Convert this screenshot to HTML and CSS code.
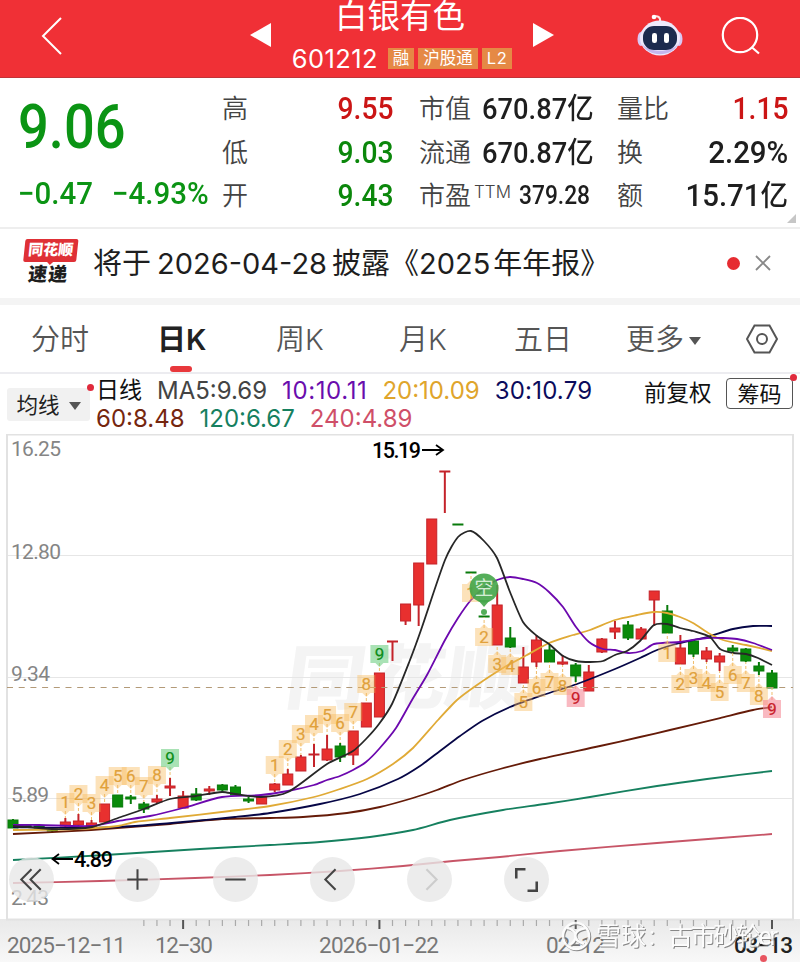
FILE: index.html
```html
<!DOCTYPE html>
<html lang="zh-CN">
    <head>
        <meta charset="UTF-8">
        <meta name="viewport" content="width=device-width, initial-scale=1.0">
        <title>白银有色 601212</title>
        <link rel="stylesheet" href="styles.css">
    </head>

    <body>
        <header class="header">
            <svg class="back" width="22" height="38" viewBox="0 0 22 38"><path d="M20 1 L2 19 L20 37"/></svg>
            <svg class="prev" width="21" height="24" viewBox="0 0 21 24"><path d="M0 12 L21 0 V24 Z"/></svg>
            <div class="stock">
                <h1>白银有色</h1>
                <div class="stock-code">
                    <span class="code">601212</span>
                    <span class="tag">融</span>
                    <span class="tag">沪股通</span>
                    <span class="tag level">L2</span>
                </div>
            </div>
            <svg class="next" width="21" height="24" viewBox="0 0 21 24"><path d="M21 12 L0 0 V24 Z"/></svg>
            <svg class="robot" width="46" height="44" viewBox="0 0 46 44">
                <path d="M23 8 C24 3 20 1 17 3" fill="none" stroke="#ffe4e4" stroke-width="2"/>
                <circle cx="17" cy="3" r="2.3" fill="#fff"/>
                <ellipse cx="4" cy="25" rx="3.5" ry="7" fill="#d9c8f4"/>
                <ellipse cx="42" cy="25" rx="3.5" ry="7" fill="#d9c8f4"/>
                <ellipse cx="23" cy="24" rx="20" ry="17.5" fill="#eee9fc"/>
                <path d="M5 30 C10 43 35 44 41 30 C34 39 12 39 5 30Z" fill="#c5b6ee"/>
                <rect x="6" y="12" width="34" height="24" rx="11" fill="#1c2a4e"/>
                <rect x="15" y="19" width="5" height="10" rx="2.3" fill="#fff"/>
                <rect x="27" y="19" width="5" height="10" rx="2.3" fill="#fff"/>
            </svg>
            <svg class="search" width="40" height="40" viewBox="0 0 40 40"><circle cx="19" cy="18" r="17.2"/><path d="M30.500 30 L38 36.500"/></svg>
        </header>

        <section class="quote">
            <div class="price">
                <div class="last num">9.06</div>
                <div class="change"><span class="num">−0.47</span><span class="num">−4.93%</span></div>
            </div>
            <dl class="stats">
                <div><dt>高</dt><dd class="num red">9.55</dd></div>
                <div><dt>低</dt><dd class="num green">9.03</dd></div>
                <div><dt>开</dt><dd class="num green">9.43</dd></div>
            </dl>
            <dl class="stats">
                <div><dt>市值</dt><dd class="num cap">670.87<i>亿</i></dd></div>
                <div><dt>流通</dt><dd class="num cap">670.87<i>亿</i></dd></div>
                <div><dt>市盈<sup>TTM</sup></dt><dd class="num small">379.28</dd></div>
            </dl>
            <dl class="stats">
                <div><dt>量比</dt><dd class="num red">1.15</dd></div>
                <div><dt>换</dt><dd class="num wide">2.29%</dd></div>
                <div><dt>额</dt><dd class="num wide">15.71<i>亿</i></dd></div>
            </dl>
            <span class="corner"></span>
        </section>

        <section class="news">
            <div class="news-logo">
                <span class="logo-top">同花顺</span>
                <span class="logo-bottom">速递</span>
            </div>
            <p>将于<span class="date">2026-04-28</span>披露《<span class="year">2025</span>年年报》</p>
            <span class="dot"></span>
            <svg class="close" width="16" height="16" viewBox="0 0 16 16"><path d="M1 1 L15 15 M15 1 L1 15"/></svg>
        </section>

        <nav class="tabs">
            <a>分时</a>
            <a class="active">日K</a>
            <a>周K</a>
            <a>月K</a>
            <a>五日</a>
            <a>更多<span class="caret"></span></a>
            <svg width="32" height="30" viewBox="0 0 32 30"><path d="M8.5 1.5 H23.5 L31 15 L23.5 28.500 H8.500 L1 15 Z"/><circle cx="16" cy="15" r="5"/></svg>
        </nav>

        <section class="legend">
            <button class="ma-select">均线<span class="caret"></span></button>
            <div class="ma-list">
                <div class="ma-row">
                    <b>日线</b>
                    <span class="ma5">MA5:9.69</span>
                    <span class="ma10">10:10.11</span>
                    <span class="ma20">20:10.09</span>
                    <span class="ma30">30:10.79</span>
                </div>
                <div class="ma-row">
                    <span class="ma60">60:8.48</span>
                    <span class="ma120">120:6.67</span>
                    <span class="ma240">240:4.89</span>
                </div>
            </div>
            <span class="adjust">前复权</span>
            <button class="chips">筹码</button>
        </section>

        <section class="chart">
            <svg id="kline" width="800" height="528" viewBox="0 434 800 528">
                <defs>
                    <linearGradient id="axis" x1="0" y1="0" x2="0" y2="1">
                        <stop offset="0" stop-color="#e9e9e9"/>
                        <stop offset="1" stop-color="#f8f8f8"/>
                    </linearGradient>
                </defs>
                <rect x="0" y="919" width="800" height="43" fill="url(#axis)"/>
                <text class="brand" transform="translate(283 703) skewX(-8)" textLength="240" lengthAdjust="spacingAndGlyphs">同花顺</text>
                <path class="grid" d="M7 555.500 H793 M7 677.500 H793 M7 798.500 H793"/>
                <rect class="frame" x="7" y="434.500" width="786" height="485"/>
                <g class="scale">
                    <text x="11" y="456" textLength="50">16.25</text>
                    <text x="11" y="559" textLength="50">12.80</text>
                    <text x="11" y="681" textLength="39">9.34</text>
                    <text x="11" y="802" textLength="38">5.89</text>
                    <text x="11" y="905" textLength="38">2.43</text>
                </g>
                <g id="candles"></g>
                <path class="current" d="M7 687.500 H793"/>
                <g id="averages"></g>
                <g id="marks"></g>
                <g class="pin">
                    <path d="M484 607 L478 600 H490 Z"/>
                    <circle cx="484" cy="588" r="14.500"/>
                    <circle cx="484" cy="612" r="3"/>
                    <text x="484" y="595">空</text>
                </g>
                <g class="extreme">
                    <text x="372" y="458" textLength="49">15.19</text>
                    <path d="M422 450 H442 M436 445 L443 450 L436 455"/>
                    <text x="74" y="867" textLength="39">4.89</text>
                    <path d="M73 859 H53 M59 854 L52.500 859 L59 864"/>
                </g>
                <g id="ticks"></g>
                <g class="dates">
                    <text x="7" y="953" textLength="119">2025−12−11</text>
                    <text x="155" y="953" textLength="58">12−30</text>
                    <text x="319" y="953" textLength="120">2026−01−22</text>
                    <text x="546" y="953" textLength="59">02−12</text>
                    <text class="today" x="734" y="953" textLength="59">03−13</text>
                </g>
                <circle cx="763.500" cy="958.500" r="3.500" fill="#e85560"/>
                <g class="watermark">
                    <circle cx="576" cy="936" r="13"/>
                    <path d="M567 928 C575 929 580 938 570 945 M586 928 C572 930 572 940 584 944"/>
                    <text x="596" y="945" textLength="50">雪球</text>
                    <text x="649" y="945">:</text>
                    <text x="668" y="945" textLength="110">古市砂轮er</text>
                </g>
            </svg>
            <div class="controls">
                <button><svg viewBox="0 0 44 44"><path d="M22 12 L12 22 L22 32 M31 12 L21 22 L31 32"/></svg></button>
                <button><svg viewBox="0 0 44 44"><path d="M12 22 H32 M22 12 V32"/></svg></button>
                <button><svg viewBox="0 0 44 44"><path d="M12 22 H32"/></svg></button>
                <button><svg viewBox="0 0 44 44"><path d="M25 12 L15 22 L25 32"/></svg></button>
                <button class="disabled"><svg viewBox="0 0 44 44"><path d="M19 12 L29 22 L19 32"/></svg></button>
                <button><svg viewBox="0 0 44 44"><path class="bold" d="M12 21 V12 H21 M32 24 V33 H23"/></svg></button>
            </div>
        </section>

        <script src="chart.js"></script>
    </body>
</html>
```
FILE: styles.css
```css
body {
    margin: 0;
    width: 800px;
    height: 962px;
    overflow: hidden;
    background-color: #fff;
    font-family: Inter, "Noto Sans CJK SC", sans-serif;
    color: #1e1e1e;
}

button {
    font-family: inherit;
    border: none;
    padding: 0;
}

svg {
    display: block;
    fill: none;
}

.red { color: #cb1515; }
.green { color: #0b870b; }

.num {
    font-family: Roboto, "Noto Sans CJK SC", sans-serif;
    font-weight: 500;
}

/* header */
.header {
    display: flex;
    align-items: flex-start;
    box-sizing: border-box;
    height: 78px;
    background-color: #f03036;
    border-bottom: 1px solid #c13338;
    color: #fff;
}

.header .back {
    margin: 17px 0 0 41px;
    stroke: #fff;
    stroke-width: 2;
}

.header .prev,
.header .next {
    margin-top: 23px;
    fill: #fff;
}

.header .prev { margin-left: 187px; }
.header .robot { margin: 14px 0 0 83px; }

.header .search {
    margin: 17px 0 0 38px;
    stroke: #fff;
    stroke-width: 2.2;
}

.stock {
    width: 262px;
    display: flex;
    flex-direction: column;
    align-items: center;
}

.stock h1 {
    margin: 0 4px 0 0;
    height: 44px;
    font-size: 32.5px;
    font-weight: 400;
    line-height: 34px;
}

.stock-code {
    display: flex;
    align-items: center;
    gap: 4px;
    height: 28px;
}

.stock-code .code {
    width: 92px;
    font-size: 25.5px;
    letter-spacing: 0.4px;
}

.tag {
    padding: 0 5px;
    height: 21px;
    background-color: #e58945;
    font-size: 16.5px;
    line-height: 20px;
}

.tag.level { letter-spacing: 0.5px; }

/* quote panel */
.quote {
    position: relative;
    display: grid;
    grid-template-columns: 204px 171px 171px 171px;
    box-sizing: border-box;
    height: 151px;
    padding-left: 18px;
    border-bottom: 2px solid #eee;
}

.price { color: #0b9414; }

.last {
    height: 94px;
    font-size: 62px;
    line-height: 97px;
    transform: scaleX(0.875);
    transform-origin: 0 0;
}

.change {
    display: flex;
    gap: 20px;
    font-size: 31px;
    line-height: 44px;
    transform: scaleX(0.95);
    transform-origin: 0 0;
    white-space: nowrap;
}

.stats {
    margin: 9px 0 0;
}

.stats + .stats { margin-left: 26px; width: 171px; }
.stats + .stats + .stats { margin-left: 53px; }

.stats > div {
    display: flex;
    justify-content: space-between;
    height: 43.5px;
    line-height: 43.5px;
    white-space: nowrap;
}

.stats dt {
    font-size: 26px;
    font-weight: 350;
    color: #444;
}

.stats sup {
    font-size: 17px;
    line-height: 0;
    vertical-align: 7px;
    margin-left: 3px;
}

.stats dd {
    margin: 0;
    font-size: 31px;
    transform: scaleX(0.91);
    transform-origin: 100% 0;
}

.stats .cap { font-size: 30px; }
.stats .wide { transform: scaleX(0.95); }
.stats dd.small { font-size: 25px; }
.stats dd i { font-style: normal; font-size: 29px; }

.corner {
    position: absolute;
    right: 4px;
    bottom: 4px;
    border-left: 9px solid transparent;
    border-bottom: 9px solid #c6c6c6;
}

/* news strip */
.news {
    display: flex;
    align-items: center;
    box-sizing: border-box;
    height: 76px;
    padding: 0 29px 7px 22px;
    border-bottom: 7px solid #f4f4f4;
}

.news-logo {
    display: flex;
    flex-direction: column;
    align-items: center;
    width: 55px;
    margin-top: 6px;
    font-weight: 900;
    transform: skewX(-6deg);
}

.logo-top {
    position: relative;
    width: 53px;
    height: 23px;
    border-radius: 2px;
    background-color: #df3036;
    color: #fff;
    font-size: 15px;
    line-height: 22px;
    text-align: center;
}

.logo-top::after {
    content: "";
    position: absolute;
    left: 24px;
    top: 23px;
    border: 3px solid transparent;
    border-top-color: #df3036;
}

.logo-bottom {
    font-size: 19px;
    line-height: 25px;
    letter-spacing: 1px;
}

.news p {
    flex: 1;
    margin: 2px 0 0 16px;
    font-size: 29px;
    white-space: nowrap;
}

.news .date { margin: 0 5px 0 6px; }
.news .year { margin-right: 3px; }

.news .dot {
    width: 13px;
    height: 13px;
    margin: 6px 15px 0 0;
    border-radius: 50%;
    background-color: #e62c31;
}

.news .close {
    margin-top: 5px;
    stroke: #888;
    stroke-width: 1.8;
}

/* period tabs */
.tabs {
    display: grid;
    grid-template-columns: 126px 119px 123px 115px 112px 120px 32px;
    align-items: center;
    box-sizing: border-box;
    height: 69px;
    padding-left: 31px;
    border-bottom: 2px solid #ececf0;
    font-size: 29px;
    font-weight: 350;
    color: #555;
}

.tabs a {
    position: relative;
    line-height: 69px;
    height: 67px;
    white-space: nowrap;
}

.tabs .active {
    font-weight: 600;
    color: #222;
}

.tabs .active::after {
    content: "";
    position: absolute;
    left: 13px;
    bottom: 0;
    width: 22px;
    height: 6px;
    border-radius: 3px;
    background-color: #e8383c;
}

.tabs svg {
    stroke: #555;
    stroke-width: 2;
}

.caret {
    display: inline-block;
    margin-left: 5px;
    border: 6px solid transparent;
    border-top: 8px solid #555;
    border-bottom: none;
    vertical-align: 5px;
}

/* moving average legend */
.legend {
    display: flex;
    height: 60px;
    color: #111;
}

.ma-select {
    position: relative;
    width: 83px;
    height: 33px;
    margin: 14px 7px 0 7px;
    border-radius: 3px;
    background-color: #f1f1f1;
    font-size: 21.500px;
    line-height: 30px;
    color: #222;
}

.ma-select .caret { margin-left: 9px; vertical-align: 3px; }

.ma-select::after,
.chips::after {
    content: "";
    position: absolute;
    width: 7px;
    height: 7px;
    border-radius: 50%;
    background-color: #e02a3c;
}

.ma-select::after { right: -4px; top: -4px; }

.ma-list {
    width: 547px;
    margin-left: -1px;
    margin-right: 1px;
    padding-top: 2px;
    font-size: 24px;
    line-height: 29px;
}

.ma-row {
    display: flex;
    gap: 15px;
    height: 28px;
    white-space: nowrap;
}

.ma-row b { font-size: 23px; font-weight: 400; }
.ma5 { color: #444; }
.ma10 { color: #6a0dad; letter-spacing: 0.6px; }
.ma20 { color: #dfa52c; }
.ma30 { color: #0b0b5c; letter-spacing: 0.2px; }
.ma60 { color: #75260e; }
.ma120 { color: #16805f; }
.ma240 { color: #cf4f68; }

.adjust {
    width: 82px;
    padding-top: 4px;
    font-size: 22.500px;
    line-height: 30px;
}

.chips {
    position: relative;
    width: 67px;
    height: 31px;
    margin-top: 4px;
    box-sizing: border-box;
    border: 1px solid #555;
    border-radius: 4px;
    background-color: #fff;
    font-size: 22px;
    line-height: 26px;
    color: #111;
}

.chips::after { right: -5px; top: -5px; }

/* chart */
.chart { position: relative; }

.chart text { font-family: Roboto, "Noto Sans CJK SC", sans-serif; }

.brand { font-size: 70px; font-weight: 900; fill: #f4f4f4; }
.grid { stroke: #e6e6e6; }
.frame { stroke: #e2e2e2; stroke-width: 2; }
.current { stroke: #b39a78; stroke-dasharray: 6 5.7; stroke-width: 1.2; }
.scale { font-size: 21px; fill: #858585; }
.dates { font-size: 22.5px; fill: #777; }
.dates .today { font-weight: 500; fill: #222; }
.ticks { stroke: #aaa; stroke-width: 1.2; }
.major { stroke: #555; stroke-width: 2; }

.up { fill: #e8302f; stroke: #c4232a; }
.down { fill: #0a8a0a; stroke: #087a0b; }
.wick { stroke-width: 2; }
.average { stroke-width: 1.8; stroke-linejoin: round; }

.mark { fill: #f8ba5b; fill-opacity: 0.42; }
.mark.green { fill: #6fcf83; fill-opacity: 0.6; }
.mark.pink { fill: #f58b98; fill-opacity: 0.6; }
.mark-line { stroke: #efbd6b; stroke-dasharray: 3 2; }
.mark-text { font-size: 17px; text-anchor: middle; fill: #e1a13b; stroke: #e1a13b; stroke-width: 0.2; }
.mark-text.green { fill: #0c8d18; stroke: #0c8d18; }
.mark-text.pink { fill: #c91d2b; stroke: #c91d2b; }

.pin { fill: #43a548; fill-opacity: 0.9; }
.pin text { font-size: 19px; fill: #e5f7e6; text-anchor: middle; }

.extreme { fill: #000; }
.extreme text { font-size: 21.500px; font-weight: 500; }
.extreme path { fill: none; stroke: #000; stroke-width: 1.8; }

.watermark { fill: #fff; opacity: 0.85; filter: drop-shadow(1px 1px 0.5px #777); }
.watermark text { font-size: 25px; fill: #fff; }
.watermark circle,
.watermark path { fill: none; stroke: #fff; stroke-width: 2.5; }

.controls {
    position: absolute;
    left: 9px;
    top: 423px;
    display: flex;
    gap: 52.300px;
}

.controls button {
    width: 45px;
    height: 45px;
    border-radius: 50%;
    background-color: rgba(231, 231, 231, 0.8);
}

.controls button:first-child { margin-right: 9px; }

.controls path { stroke: #444; stroke-width: 2; }
.controls .bold { stroke-width: 2.5; }
.controls .disabled path { stroke: #ccc; }
```
FILE: chart.js
```javascript
const NS = 'http://www.w3.org/2000/svg';
const STEP = 13.086;
const FIRST = 13;

// [direction, high, body top, body bottom, low]
const candles = [
    ['d', 819, 820, 828, 828], ['d', 824, 825, 827, 828], ['d', 825, 826, 828, 829], ['d', 827, 828, 831, 833],
    ['u', 818, 822, 826, 827], ['u', 814, 821, 825, 826], ['u', 820, 823, 826, 826], ['u', 804, 804, 822, 822],
    ['d', 795, 795, 807, 807], ['d', 795, 797, 799, 804], ['d', 802, 804, 809, 813], ['u', 795, 799, 802, 803],
    ['u', 778, 786, 788, 796], ['u', 791, 796, 808, 808], ['d', 788, 794, 800, 801], ['u', 786, 789, 791, 795],
    ['d', 784, 785, 790, 792], ['d', 785, 787, 795, 795], ['d', 797, 799, 801, 803], ['u', 797, 797, 804, 804],
    ['u', 783, 784, 790, 792], ['u', 769, 774, 785, 785], ['u', 755, 757, 771, 771], ['u', 744, 754, 755, 767],
    ['u', 735, 749, 760, 761], ['d', 743, 746, 757, 762], ['u', 731, 731, 755, 765], ['u', 703, 703, 727, 727],
    ['u', 673, 673, 717, 717], ['u', 641, 641, 642, 661], ['u', 604, 604, 621, 625], ['u', 563, 563, 605, 626],
    ['u', 519, 519, 564, 564], ['u', 471, 471, 472, 513], ['d', 524, 524, 525, 525], ['d', 572, 572, 573, 573],
    ['d', 616, 616, 617, 617], ['u', 585, 605, 645, 645], ['d', 627, 638, 647, 648], ['u', 647, 667, 683, 683],
    ['u', 635, 640, 662, 667], ['d', 645, 650, 662, 662], ['u', 655, 662, 664, 665], ['d', 663, 665, 676, 682],
    ['u', 665, 672, 691, 691], ['u', 638, 639, 652, 653], ['u', 621, 628, 632, 639], ['d', 621, 625, 638, 640],
    ['u', 627, 629, 639, 640], ['u', 591, 591, 600, 626], ['d', 605, 611, 633, 633], ['u', 635, 648, 664, 664],
    ['d', 640, 641, 654, 657], ['u', 647, 651, 659, 662], ['u', 653, 656, 662, 671], ['d', 645, 648, 651, 653],
    ['d', 648, 649, 661, 662], ['d', 662, 666, 671, 675], ['d', 670, 673, 688, 688]
];

const averages = {
    '#16805f': '13,860 105,855 200,849 270,845 320,842 370,837 413,830 450,820 503,810 545,804 590,797 657,786 707,779 772,771',
    '#c75567': '13,883 100,881 195,878 270,875 340,871 403,866 453,861 500,857 560,851 657,843 772,834',
    '#651b08': '13,834 91,830 170,824 222,819 270,818 303,817 347,813 380,807 413,798 437,790 463,780 500,769 540,759 600,746 640,737 670,730 720,718 753,710 772,707',
    '#060646': '13,827 91,828 135,826 183,822 235,817 270,813 320,804 360,794 398,779 420,766 440,751 460,736 482,721 510,707 543,695 577,684 615,669 640,658 657,650 680,643 707,637 733,629 753,626 772,626',
    '#e0aa36': '13,830 78,829 118,826 135,822 170,818 230,811 270,806 314,797 340,789 367,779 393,764 413,748 438,720 457,700 477,685 503,668 527,655 549,643 573,635 590,630 615,620 637,615 654,612 667,613 680,617 693,623 710,634 723,640 746,645 772,651',
    '#6c08ae': '13,825 39,825 91,826 118,821 150,816 183,808 222,797 261,795 288,791 314,785 327,780 340,776 353,770 366,762 379,749 396,728 412,700 427,675 445,640 458,618 471,600 484,588 497,580 510,577 523,579 537,583 549,592 563,607 576,627 589,642 603,649 615,650 628,653 642,651 654,644 680,642 693,640 707,638 723,638 737,639 753,643 772,650',
    '#272727': '13,826 52,829 92,827 118,818 144,809 170,799 196,796 222,792 235,794 261,797 288,792 327,764 353,751 366,739 379,724 392,704 410,660 421,630 445,560 458,537 471,531 484,541 497,558 510,592 523,622 537,636 549,644 563,656 576,661 590,662 603,661 615,655 627,651 640,641 654,625 667,624 680,628 693,631 710,637 720,649 733,653 746,654 758,658 772,665'
};

// nine-count groups: first candle, side of the candle, centre of each box
const counts = [
    { start: 4, side: 'top', last: 'green', y: [802, 794, 803, 785, 776, 776, 786, 775, 758] },
    { start: 20, side: 'top', last: 'green', y: [765, 749, 734, 724, 715, 723, 712, 684, 654] },
    { start: 35, side: 'bottom', last: 'pink', y: [593, 637, 664, 666, 702, 688, 682, 686, 698] },
    { start: 50, side: 'bottom', last: 'pink', y: [653, 684, 678, 683, 692, 675, 683, 696, 709] }
];

function add(parent, tag, attrs, text) {
    const el = document.createElementNS(NS, tag);
    for (const key in attrs) {
        el.setAttribute(key, attrs[key]);
    }
    if (text) {
        el.textContent = text;
    }
    document.getElementById(parent).appendChild(el);
}

// rounds the corners of a line through the given points
function smooth(points) {
    const p = points.split(' ').map(pair => pair.split(',').map(Number));
    let d = `M${p[0]}`;
    for (let i = 0; i < p.length - 1; i++) {
        const a = p[i - 1] || p[i];
        const b = p[i];
        const c = p[i + 1];
        const e = p[i + 2] || c;
        const k = (c[0] - b[0]) / 4;
        const s1 = (c[1] - a[1]) / (c[0] - a[0]);
        const s2 = (e[1] - b[1]) / (e[0] - b[0]);
        d += ` C${b[0] + k} ${b[1] + k * s1} ${c[0] - k} ${c[1] - k * s2} ${c[0]} ${c[1]}`;
    }
    return d;
}

candles.forEach(([dir, high, top, bottom, low], i) => {
    const x = FIRST + i * STEP;
    const cls = dir === 'u' ? 'up' : 'down';
    add('candles', 'path', { class: cls + ' wick', d: `M${x} ${high} V${low}` });
    add('candles', 'rect', { class: cls, x: x - 5, y: top, width: 10, height: bottom - top });
});

for (const color in averages) {
    add('averages', 'path', { class: 'average', stroke: color, d: smooth(averages[color]) });
}

counts.forEach(({ start, side, last, y }) => {
    y.forEach((cy, n) => {
        const x = FIRST + (start + n) * STEP;
        const cls = n === 8 ? last : '';
        const s = side === 'top' ? 1 : -1;
        const candle = candles[start + n];
        const end = side === 'top' ? candle[1] : candle[4];
        add('marks', 'path', { class: 'mark-line', d: `M${x} ${cy + 9 * s} V${end}` });
        add('marks', 'path', {
            class: 'mark ' + cls,
            d: `M${x - 9} ${cy - 9 * s} H${x + 9} V${cy + 9 * s} H${x + 4} L${x} ${cy + 13 * s} L${x - 4} ${cy + 9 * s} H${x - 9} Z`
        });
        add('marks', 'text', { class: 'mark-text ' + cls, x: x, y: cy + 6 }, String(n + 1));
    });
});

for (let i = 10; i <= 58; i++) {
    const x = FIRST + i * STEP;
    const major = i === 13 || i === 28 || i === 43 || i === 58;
    add('ticks', 'path', { class: major ? 'major' : 'ticks', d: `M${x} 920 V${major ? 929 : 926}` });
}
```
